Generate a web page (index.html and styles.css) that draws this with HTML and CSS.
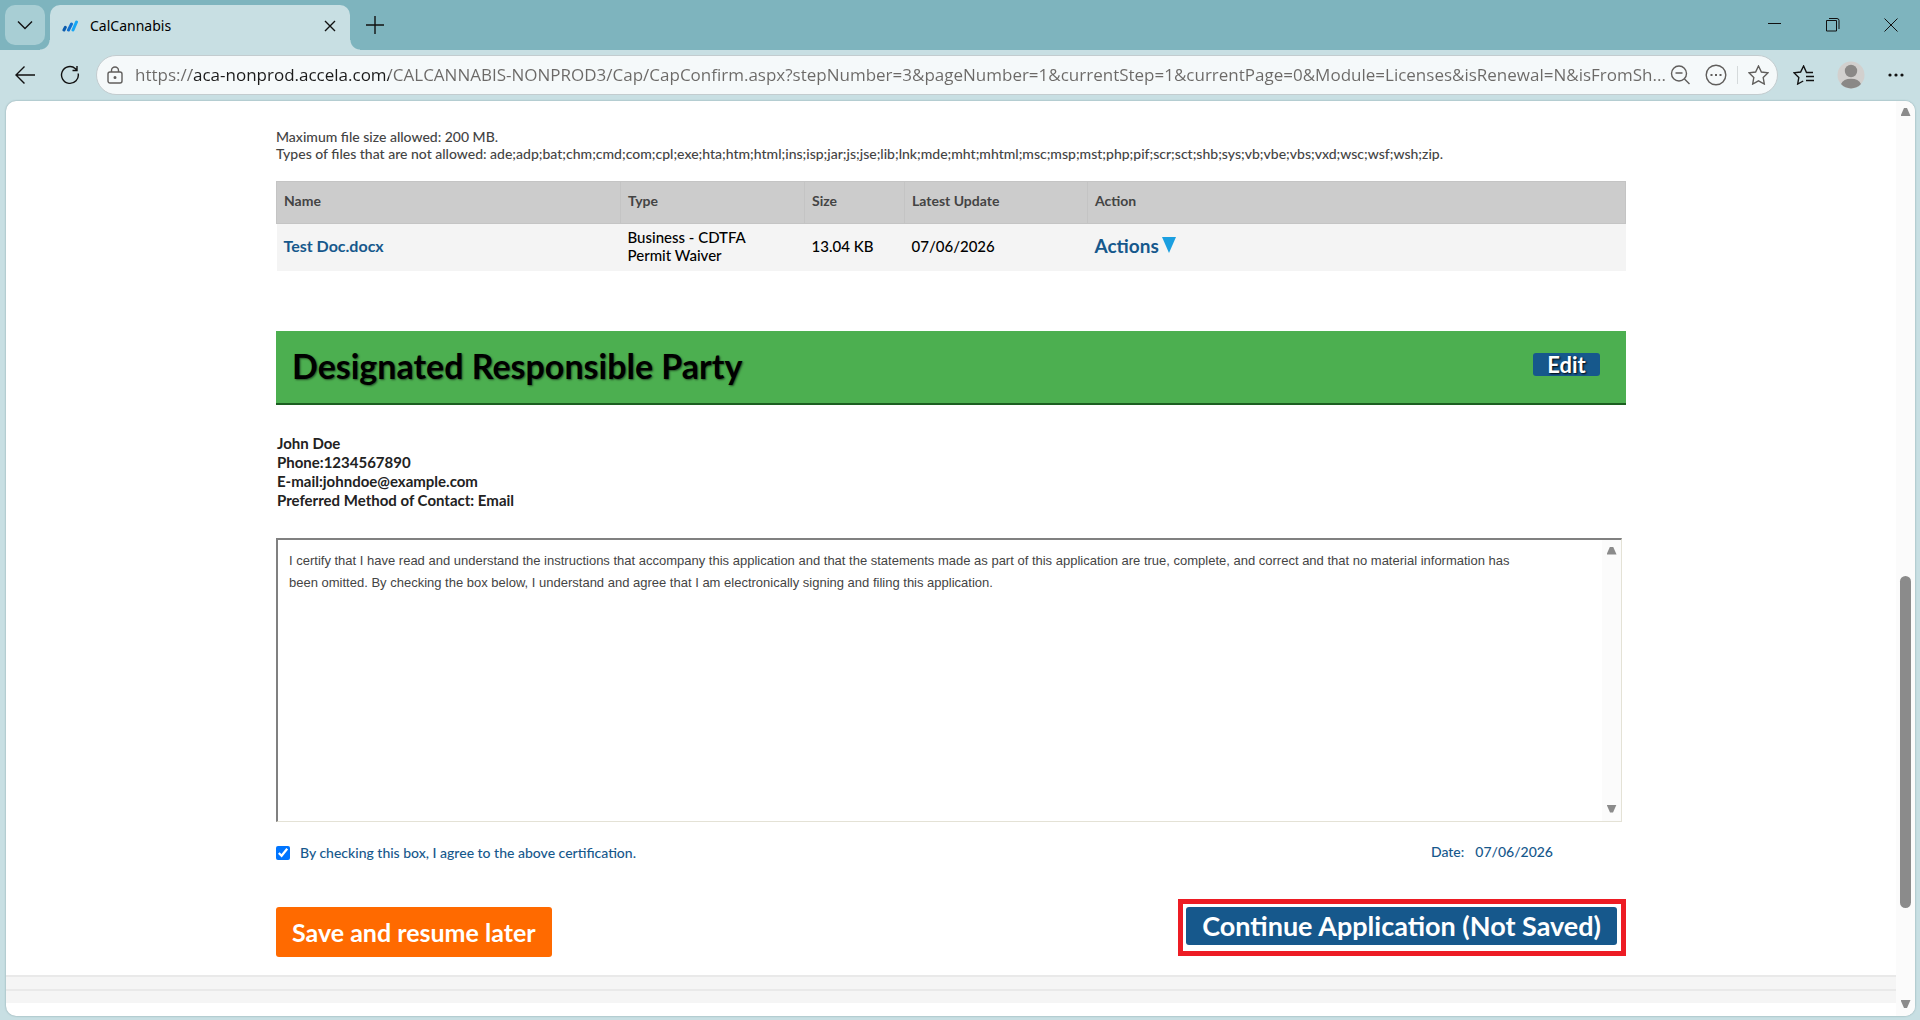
FILE: index.html
```html
<!DOCTYPE html>
<html lang="en">
<head>
<meta charset="utf-8">
<title>CalCannabis</title>
<link rel="stylesheet" href="styles.css">
</head>
<body>
<div class="browser">
  <header class="tabstrip">
    <button class="tab-menu" aria-label="Tab actions"><svg width="16" height="10" viewBox="0 0 16 10"><path d="M1 1.500l7 7 7-7"/></svg></button>
    <div class="tab">
      <svg class="favicon" width="16" height="12" viewBox="0 0 16 12"><path d="M2 10l1.300-2.600" stroke="#0b5cad"/><path d="M6.500 10l3-6" stroke="#0f6fd0"/><path d="M11 10l3.500-8" stroke="#16a6f5"/></svg>
      <span class="tab-title">CalCannabis</span>
      <button class="icon-btn" aria-label="Close tab"><svg width="12" height="12" viewBox="0 0 12 12"><path d="M1 1l10 10M11 1L1 11"/></svg></button>
    </div>
    <button class="icon-btn new-tab" aria-label="New tab"><svg width="20" height="20" viewBox="0 0 20 20"><path d="M10 1v18M1 10h18"/></svg></button>
    <div class="window-controls">
      <button class="icon-btn" aria-label="Minimize"><svg width="14" height="14" viewBox="0 0 14 14"><path d="M0 5.500h13" stroke-width="1"/></svg></button>
      <button class="icon-btn" aria-label="Restore"><svg width="14" height="14" viewBox="0 0 14 14"><path d="M.5 2.500h10v10.500H.5zM3 .5h8q2 0 2 2V11" stroke-width="1"/></svg></button>
      <button class="icon-btn" aria-label="Close window"><svg width="14" height="14" viewBox="0 0 14 14"><path d="M.5.5l13 13M13.500.5l-13 13" stroke-width="1"/></svg></button>
    </div>
  </header>
  <nav class="toolbar">
    <button class="icon-btn" aria-label="Back"><svg width="22" height="20" viewBox="0 0 22 20"><path d="M20 10H1M9.500 1.500L1 10l8.500 8.500"/></svg></button>
    <button class="icon-btn refresh" aria-label="Refresh"><svg width="20" height="20" viewBox="0 0 20 20"><path d="M18.200 8.500A8.400 8.400 0 1 1 15.500 3.700L17 5.200M17 1v4.500h-4.500"/></svg></button>
    <div class="address">
      <svg width="16" height="18" viewBox="0 0 16 18" class="grey"><rect x="1" y="6" width="14" height="11" rx="2"/><path d="M4.500 6V4.500a3.500 3.500 0 0 1 7 0V6"/><circle cx="8" cy="11.500" r=".8" fill="#605e5c"/></svg>
      <input class="url" type="text" aria-label="Address" value="https://aca-nonprod.accela.com/CALCANNABIS-NONPROD3/Cap/CapConfirm.aspx?stepNumber=3&amp;pageNumber=1&amp;currentStep=1&amp;currentPage=0&amp;Module=Licenses&amp;isRenewal=N&amp;isFromSh...">
      <div class="address-tools">
        <button class="icon-btn grey" aria-label="Zoom out"><svg width="20" height="20" viewBox="0 0 20 20"><circle cx="9" cy="8.500" r="7.500"/><path d="M5.500 8h7M14.500 14l5 5"/></svg></button>
        <button class="icon-btn grey" aria-label="Site options"><svg width="22" height="22" viewBox="0 0 22 22"><circle cx="11" cy="11" r="9.800"/><path d="M5.500 11h2M10 11h2M14.500 11h2" stroke-width="2"/></svg></button>
        <span class="divider"></span>
        <button class="icon-btn grey" aria-label="Add to favorites"><svg width="21" height="20" viewBox="0 0 21 20"><path d="M10.500 1l2.900 6 6.500.9-4.700 4.600 1.100 6.500-5.800-3.100-5.800 3.100 1.100-6.500L1.100 7.900l6.500-.9z"/></svg></button>
      </div>
    </div>
    <div class="toolbar-actions">
      <button class="icon-btn" aria-label="Favorites"><svg width="22" height="20" viewBox="0 0 22 20"><path d="M20 7.500h-6.500L10.600 1 7.600 7l-6.500.9 4.700 4.600L4.700 19l5.500-3M13 11.500h8M13 15.500h8"/></svg></button>
      <button class="icon-btn" aria-label="Profile"><svg width="28" height="28" viewBox="0 0 28 28" class="avatar"><circle cx="14" cy="14" r="13.500" fill="#d2d0ce"/><circle cx="14" cy="10" r="6.200" fill="#8a8886"/><path d="M4 23a10.500 7.500 0 0 1 20 0 13.500 13.500 0 0 1-20 0z" fill="#8a8886"/></svg></button>
      <button class="icon-btn" aria-label="Settings and more"><svg width="18" height="4" viewBox="0 0 18 4" class="solid"><circle cx="3" cy="2" r="1.600"/><circle cx="9" cy="2" r="1.600"/><circle cx="15" cy="2" r="1.600"/></svg></button>
    </div>
  </nav>
  <div class="frame">
    <div class="viewport">
      <main class="content">
        <p class="file-notes">Maximum file size allowed: 200 MB.<br>Types of files that are not allowed: ade;adp;bat;chm;cmd;com;cpl;exe;hta;htm;html;ins;isp;jar;js;jse;lib;lnk;mde;mht;mhtml;msc;msp;mst;php;pif;scr;sct;shb;sys;vb;vbe;vbs;vxd;wsc;wsf;wsh;zip.</p>
        <table class="files">
          <colgroup><col class="c-name"><col class="c-type"><col class="c-size"><col class="c-date"><col></colgroup>
          <thead><tr><th>Name</th><th>Type</th><th>Size</th><th>Latest Update</th><th>Action</th></tr></thead>
          <tbody><tr>
            <td><a href="#doc">Test Doc.docx</a></td>
            <td>Business - CDTFA<br>Permit Waiver</td>
            <td>13.04 KB</td>
            <td>07/06/2026</td>
            <td><a class="actions" href="#actions">Actions<svg width="14" height="16" viewBox="0 0 14 16"><path d="M0 0h14L7 16z" fill="#1b9fe0"/></svg></a></td>
          </tr></tbody>
        </table>
        <section class="party-bar"><h1>Designated Responsible Party</h1><button class="edit">Edit</button></section>
        <address class="party">John Doe<br>Phone:1234567890<br>E-mail:johndoe@example.com<br>Preferred Method of Contact: Email</address>
        <div class="terms">
          <textarea aria-label="Certification" readonly>I certify that I have read and understand the instructions that accompany this application and that the statements made as part of this application are true, complete, and correct and that no material information has been omitted. By checking the box below, I understand and agree that I am electronically signing and filing this application.</textarea>
          <div class="scroll-ends"><span class="arrow up"></span><span class="arrow down"></span></div>
        </div>
        <div class="agree">
          <label><input type="checkbox" checked>By checking this box, I agree to the above certification.</label>
          <div class="date"><span>Date:</span><span>07/06/2026</span></div>
        </div>
        <div class="buttons">
          <button class="save">Save and resume later</button>
          <div class="highlight"><button class="continue">Continue Application (Not Saved)</button></div>
        </div>
      </main>
      <footer class="footer"><div class="band"></div><div class="band"></div></footer>
    </div>
    <div class="scrollbar"><span class="arrow up"></span><span class="thumb"></span><span class="arrow down"></span></div>
  </div>
</div>
</body>
</html>
```
FILE: styles.css
```css
* { box-sizing: border-box; }
body { margin: 0; font-family: Lato, "Open Sans", sans-serif; font-size: 14px; color: #000; }
button { font: inherit; border: 0; background: none; padding: 0; }
svg { display: block; fill: none; stroke: #111; stroke-width: 1.4; }
a { color: #16588c; text-decoration: none; font-weight: 700; }

.browser { height: 100vh; display: flex; flex-direction: column; background: #c8dfe3; }
.icon-btn { display: flex; align-items: center; justify-content: center; flex: none; }
.grey svg, svg.grey { stroke: #605e5c; }
svg.avatar { stroke: none; }
svg.solid { fill: #111; stroke: none; }

.tabstrip { height: 50px; flex: none; display: flex; align-items: center; background: #7eb4be; padding-left: 5px; font-family: "Noto Sans", sans-serif; }
.tab-menu { width: 40px; height: 40px; border-radius: 10px; background: #a8ced4; display: flex; align-items: center; justify-content: center; }
.tab { position: relative; align-self: flex-end; width: 300px; height: 45px; margin-left: 5px; padding: 0 14px 4px 12px; display: flex; align-items: center; background: #c8dfe3; border-radius: 10px 10px 0 0; }
.tab::before, .tab::after { content: ""; position: absolute; bottom: 0; width: 10px; height: 10px; }
.tab::before { left: -10px; background: radial-gradient(circle at 0 0, transparent 9px, #c8dfe3 10px); }
.tab::after { right: -10px; background: radial-gradient(circle at 100% 0, transparent 9px, #c8dfe3 10px); }
.favicon { stroke-width: 3; stroke-linecap: round; }
.tab-title { flex: 1; margin-left: 12px; }
.new-tab { margin-left: 15px; }
.window-controls { margin-left: auto; display: flex; gap: 44px; padding-right: 22px; }

.toolbar { height: 51px; flex: none; display: flex; align-items: center; padding: 0 15px 2px; }
.refresh { margin-left: 23px; }
.address { flex: 1; min-width: 0; height: 40px; margin: 0 15px 0 16px; padding: 0 8px 0 10px; display: flex; align-items: center; background: #f5f9fa; border: 1px solid #c3cccf; border-radius: 20px; }
.url { flex: 1; min-width: 0; height: 36px; margin-left: 12px; padding: 0; border: 0; outline: 0; font-family: "Open Sans", sans-serif; font-size: 17px; color: transparent; background: linear-gradient(90deg, #6b6967 57px, #1b1b1b 57px, #1b1b1b 254px, #6b6967 254px) text; -webkit-background-clip: text; }
.address-tools { display: flex; align-items: center; gap: 15px; }
.divider { width: 1px; height: 18px; background: #d5dadb; margin: 0 -5px; }
.toolbar-actions { display: flex; align-items: center; gap: 22px; }

.frame { flex: 1; min-height: 0; margin: 0 5px 4px 6px; display: flex; background: #fff; border-radius: 10px; overflow: hidden; box-shadow: 0 0 2px #7f9ba0; }
.viewport { flex: 1; min-width: 0; overflow: hidden; }
.scrollbar { width: 19px; flex: none; background: #fbfbfb; display: grid; grid-template-rows: 475fr 332fr 108fr; justify-items: center; }
.thumb { width: 11px; border-radius: 6px; background: #8b8b8b; }
.arrow { width: 10px; height: 8px; background: #8b8b8b; }
.up { clip-path: polygon(35% 0, 65% 0, 100% 100%, 0 100%); margin-top: 7px; }
.down { clip-path: polygon(0 0, 100% 0, 65% 100%, 35% 100%); margin-bottom: 8px; align-self: end; }

.content { max-width: 1350px; margin: 0 auto; }
.file-notes { margin: 0; padding-top: 27px; font-size: 14px; line-height: 17px; font-weight: 500; color: #444; }
.files { width: 100%; margin-top: 19px; table-layout: fixed; border-collapse: collapse; }
.c-name { width: 344px; } .c-type { width: 184px; } .c-size { width: 100px; } .c-date { width: 183px; }
.files th { height: 42px; padding: 0 7px 4px; text-align: left; font-size: 14px; line-height: 18px; color: #444; background: #ccc; border: 1px solid #c4c4c4; }
.files td { height: 47px; padding: 0 7px 2px; font-size: 15px; line-height: 18px; font-weight: 500; background: #f4f4f4; }
.files td a { font-size: 16px; font-weight: 700; }
.files td a.actions { display: flex; gap: 3px; font-size: 19px; }
.actions svg { stroke: none; }

.party-bar { height: 74px; margin-top: 60px; padding: 0 26px 2px 16px; display: flex; align-items: center; justify-content: space-between; background: #4caf50; border-bottom: 2px solid #1b5e20; }
.party-bar h1 { margin: 0; font-size: 34px; line-height: 40px; text-shadow: 1px 1px 2px #0008; }
.edit { width: 67px; height: 23px; margin-bottom: 2px; border-radius: 3px; background: #16588c; color: #fff; font-size: 22px; line-height: 22px; font-weight: 700; text-shadow: 1px 1px 2px #000; }
.party { margin-top: 29px; padding-left: 1px; font-style: normal; font-size: 15px; font-weight: 700; line-height: 19px; color: #222; }

.terms { height: 284px; margin: 28px 4px 0 0; display: flex; border: 1px solid #e4e2d6; border-top: 2px solid #808080; border-left: 2px solid #808080; }
.terms textarea { flex: 1; min-width: 0; border: 0; outline: 0; resize: none; overflow: hidden; margin: 0; padding: 10px 64px 10px 11px; font: 13px/22px "Liberation Sans", Arial, sans-serif; color: #444; }
.scroll-ends { width: 19px; background: #fbfbfb; display: flex; flex-direction: column; align-items: center; justify-content: space-between; }
.scroll-ends .arrow { align-self: center; }

.agree { margin: 20px 73px 0 0; display: flex; justify-content: space-between; font-size: 14px; line-height: 20px; font-weight: 500; color: #16588c; }
.agree label { display: flex; align-items: center; gap: 10px; padding-top: 1px; }
.agree input { width: 14px; height: 14px; margin: 0; accent-color: #0075ff; }
.date { display: flex; gap: 11px; }
.buttons { margin-top: 36px; height: 76px; display: flex; justify-content: space-between; align-items: flex-start; }
.save { margin-top: 8px; height: 50px; padding: 0 16px; border-radius: 3px; background: #ff6a00; color: #fff; font-size: 25px; font-weight: 700; }
.highlight { padding: 3px 4px 6px 3px; border: 5px solid #ed1c24; }
.continue { height: 38px; padding: 0 16px; border-radius: 3px; background: #16588c; color: #fff; font-size: 27px; font-weight: 700; display: block; }

.band { border-top: 2px solid #e9e9e9; height: 14px; background: #f5f5f5; }
```
